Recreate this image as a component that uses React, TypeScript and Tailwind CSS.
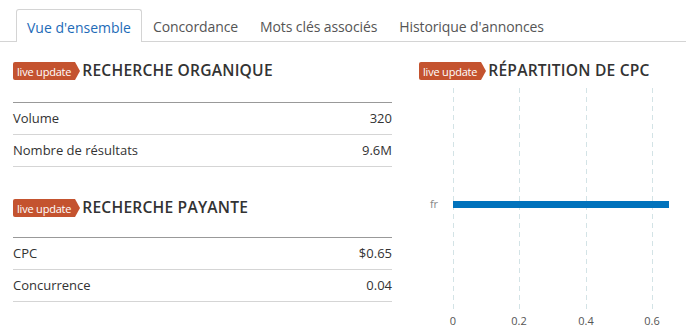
import React from "react";

function Badge() {
  return (
    <div className="relative flex items-center h-[18px] pl-[4px] pr-[4px] bg-[#c4532f] text-white text-[11px] leading-none rounded-l-[2px] mr-[7px]">
      <span className="tracking-[-0.2px]">live update</span>
      <span className="absolute right-[-5px] top-0 w-0 h-0 border-y-[9px] border-y-transparent border-l-[5px] border-l-[#c4532f]" />
    </div>
  );
}

function Heading({ title }: { title: string }) {
  return (
    <div className="flex items-center h-[18px]">
      <Badge />
      <div className="text-[15.6px] font-semibold text-[#333] tracking-[0.2px]">{title}</div>
    </div>
  );
}

function Row({ label, value }: { label: string; value: string }) {
  return (
    <div className="flex items-center justify-between h-[32px] border-b border-[#d5d5d5] text-[13px] text-[#333]">
      <span>{label}</span>
      <span>{value}</span>
    </div>
  );
}

export default function App() {
  const tabs = ["Concordance", "Mots clés associés", "Historique d'annonces"];
  const xs = [34, 100, 167, 233];
  return (
    <div
      className="w-[686px] h-[327px] bg-white overflow-hidden"
      style={{ fontFamily: '"Open Sans", "Noto Sans", sans-serif' }}
    >
      <div className="flex items-end pt-[10px] pl-[16px] border-b border-[#d4d4d4] h-[42px]">
        <div className="px-[10px] flex items-center border border-b-0 border-[#d4d4d4] rounded-t-[3px] bg-white text-[14px] text-[#1e6bb8] mb-[-1px] h-[33px] pt-[2px]">
          Vue d'ensemble
        </div>
        {tabs.map((t) => (
          <div key={t} className="h-[32px] pt-[2px] px-[11px] flex items-center text-[14px] text-[#555] tracking-[-0.1px]">
            {t}
          </div>
        ))}
      </div>
      <div className="flex">
        <div className="ml-[13px] w-[379px]">
          <div className="mt-[20px]">
            <Heading title="RECHERCHE ORGANIQUE" />
          </div>
          <div className="mt-[22px] border-t border-[#999]">
            <Row label="Volume" value="320" />
            <Row label="Nombre de résultats" value="9.6M" />
          </div>
          <div className="mt-[32px]">
            <Heading title="RECHERCHE PAYANTE" />
          </div>
          <div className="mt-[20px] border-t border-[#999]">
            <Row label="CPC" value="$0.65" />
            <Row label="Concurrence" value="0.04" />
          </div>
        </div>
        <div className="ml-[27px] flex-1">
          <div className="mt-[20px]">
            <Heading title="RÉPARTITION DE CPC" />
          </div>
          <svg width="267" height="245" className="block mt-[4px]">
            {xs.map((x) => (
              <line key={x} x1={x + 0.5} y1={4} x2={x + 0.5} y2={229} stroke="#d3e3e6" strokeDasharray="5 4" />
            ))}
            <rect x={34} y={117} width={216} height={7} fill="#0072bc" />
            <text x={15} y={124} fontSize="11" fill="#888" textAnchor="middle" fontFamily="Open Sans, sans-serif">fr</text>
            {["0", "0.2", "0.4", "0.6"].map((l, i) => (
              <text key={l} x={xs[i]} y={241} fontSize="11" fill="#555" textAnchor="middle" fontFamily="Open Sans, sans-serif">
                {l}
              </text>
            ))}
          </svg>
        </div>
      </div>
    </div>
  );
}
